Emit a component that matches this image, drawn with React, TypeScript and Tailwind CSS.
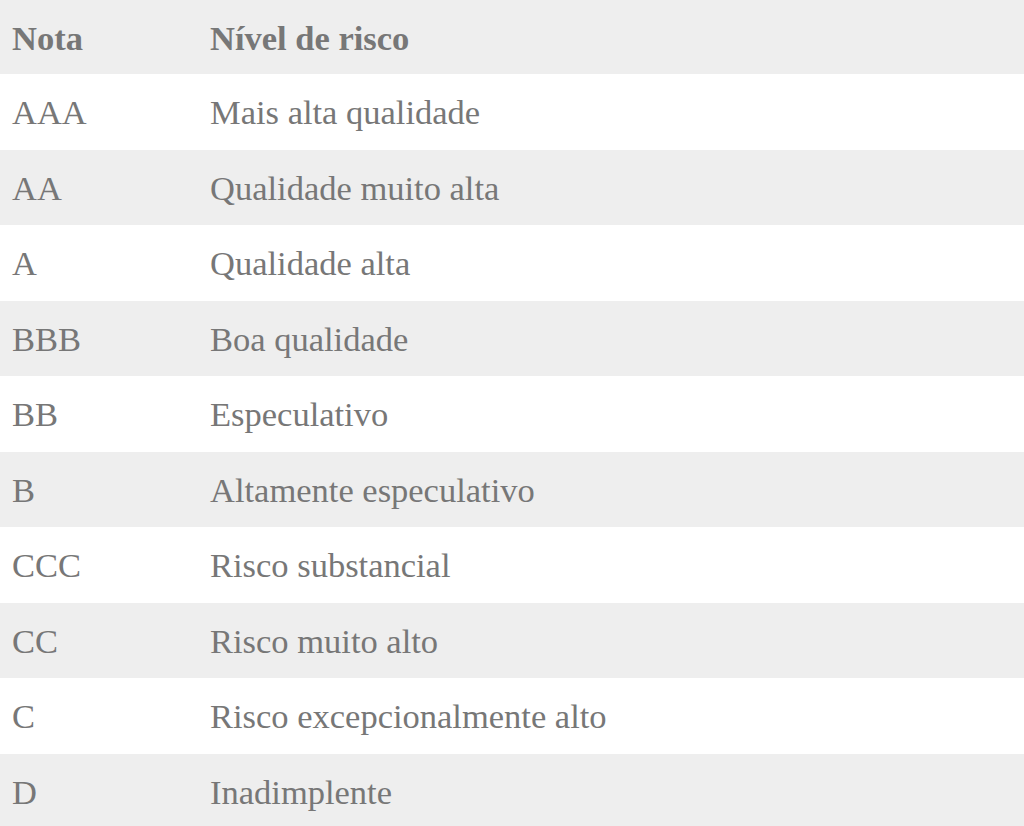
const rows = [
  ['AAA', 'Mais alta qualidade'],
  ['AA', 'Qualidade muito alta'],
  ['A', 'Qualidade alta'],
  ['BBB', 'Boa qualidade'],
  ['BB', 'Especulativo'],
  ['B', 'Altamente especulativo'],
  ['CCC', 'Risco substancial'],
  ['CC', 'Risco muito alto'],
  ['C', 'Risco excepcionalmente alto'],
  ['D', 'Inadimplente'],
]

export default function App() {
  return (
    <div
      className="w-full min-h-screen bg-white text-[#777777] text-[34.5px]"
      style={{ fontFamily: '"Liberation Serif", "DejaVu Serif", serif' }}
    >
      {/* Header */}
      <div className="flex items-center h-[74px] pt-[3px] bg-[#eeeeee] font-bold">
        <div className="w-[210px] pl-[12px]">Nota</div>
        <div className="flex-1">Nível de risco</div>
      </div>

      {rows.map(([grade, label], i) => (
        <div
          key={grade}
          className={`flex items-center h-[75.5px] pt-[3px] ${
            i % 2 === 0 ? 'bg-white' : 'bg-[#eeeeee]'
          }`}
        >
          <div className="w-[210px] pl-[12px]">{grade}</div>
          <div className="flex-1">{label}</div>
        </div>
      ))}
    </div>
  )
}
